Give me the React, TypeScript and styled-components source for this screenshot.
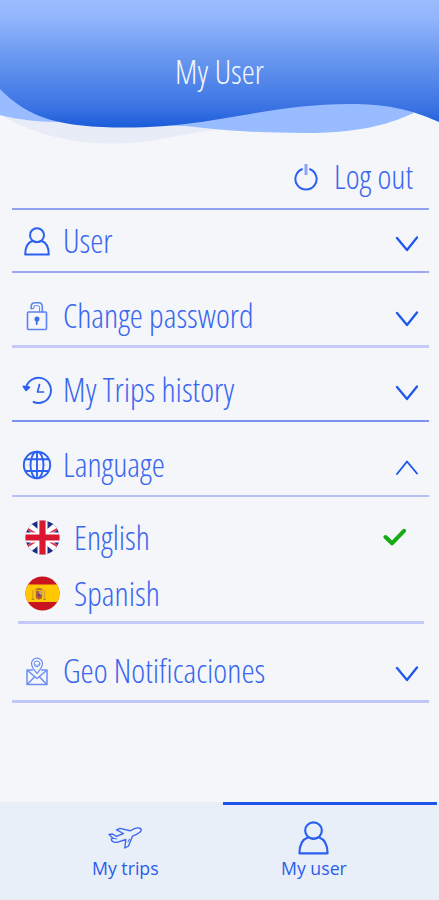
import React from 'react';
import styled, { createGlobalStyle } from 'styled-components';

const GlobalStyle = createGlobalStyle`
  * { box-sizing: border-box; }
  body { margin: 0; background: #f4f6fa; }
`;

const Screen = styled.div`
  width: 439px;
  height: 900px;
  display: flex;
  flex-direction: column;
  overflow: hidden;
  background: #f4f6fa;
  color: #3a67ef;
  font-family: 'Open Sans', 'Noto Sans', sans-serif;
`;

const Header = styled.header`
  position: relative;
  height: 146px;
  flex: none;
`;

const Waves = styled.svg`
  position: absolute;
  inset: 0;
  display: block;
`;

const Title = styled.h1`
  position: relative;
  margin: 0;
  padding-top: 49px;
  text-align: center;
  color: #f3f7ff;
  font-size: 33px;
  line-height: 46px;
  font-weight: 300;
  font-stretch: 75%;
`;

const List = styled.main`
  flex: 1;
  display: flex;
  flex-direction: column;
  padding: 0 10px 0 12px;
`;

const Row = styled.div<{ $height: number; $line: string; $thick?: number; $bottom?: number }>`
  flex: none;
  display: flex;
  align-items: flex-end;
  height: ${p => p.$height}px;
  padding: 0 10px ${p => p.$bottom ?? 7}px;
  border-bottom: ${p => p.$thick ?? 2}px solid ${p => p.$line};
`;

const LogoutRow = styled(Row)`
  justify-content: flex-end;
  padding: 0 16px 8px 0;
`;

const IconSlot = styled.span`
  width: 30px;
  height: 46px;
  display: flex;
  align-items: center;
  justify-content: center;
`;

const PowerSlot = styled(IconSlot)`
  width: 26px;
`;

const Label = styled.span<{ $gap: number }>`
  margin-left: ${p => p.$gap}px;
  font-size: 33.2px;
  line-height: 46px;
  font-weight: 300;
  font-stretch: 75%;
  white-space: nowrap;
`;

const LanguageLabel = styled(Label)`
  padding-top: 2px;
`;

const Trailing = styled.span`
  margin-left: auto;
  height: 46px;
  display: flex;
  align-items: center;
  padding-top: 5px;
`;

const CheckSlot = styled(Trailing)`
  padding-top: 0;
`;

const Languages = styled.div`
  flex: none;
  height: 127px;
  margin: 0 5px 0 6px;
  padding: 13px 0 0 7px;
  border-bottom: 3px solid #c3c9f8;
`;

const Language = styled.div`
  height: 56px;
  display: flex;
  align-items: center;
  padding: 0 17px 2px 0;
`;

const Tabs = styled.nav`
  flex: none;
  height: 98px;
  display: flex;
  background: #e9eff9;
`;

const Tab = styled.div<{ $width: number; $pad: number; $active?: boolean }>`
  width: ${p => p.$width}px;
  padding-left: ${p => p.$pad}px;
  border-top: 3px solid ${p => (p.$active ? '#1c54ec' : 'transparent')};
  display: flex;
  flex-direction: column;
  font-size: 17.7px;
  font-weight: 500;
  line-height: 24px;
  color: #2a5cec;
  white-space: nowrap;
`;

const TabBody = styled.div`
  width: max-content;
  display: flex;
  flex-direction: column;
  align-items: center;
`;

const TabIcon = styled.span`
  height: 51px;
  padding-top: 15px;
  display: flex;
  align-items: center;
`;

const stroke = { fill: 'none', stroke: '#2c60f0', strokeLinecap: 'round', strokeLinejoin: 'round' } as const;

const UserIcon = ({ width, height, weight = 2 }: { width: number; height: number; weight?: number }) => (
  <svg width={width} height={height} viewBox="0 0 26 29" preserveAspectRatio="none" {...stroke} strokeWidth={weight}>
    <ellipse cx="13" cy="8.2" rx="7" ry="7" />
    <path d="M8.6 13.8C4 15.4 1.2 19.4 1.2 27.6H24.8C24.8 19.4 22 15.4 17.4 13.8Q13 16.4 8.6 13.8Z" />
  </svg>
);

const PowerIcon = () => (
  <svg width="24" height="28" viewBox="0 0 24 28" {...stroke} strokeWidth="2">
    <path d="M8 6.2A10.6 10.6 0 1 0 16 6.2" />
    <path d="M12 1V12" stroke="#8da4f6" strokeWidth="3" strokeLinecap="butt" />
  </svg>
);

const LockIcon = () => (
  <svg width="22" height="30" viewBox="0 0 22 30" {...stroke} stroke="#5c82f3" strokeWidth="1.6">
    <rect x="1.5" y="11" width="19" height="17.5" rx="1" />
    <path d="M5.2 7.6V5.5C5.2 3 6.8 1.8 9 1.8h3.5C15 1.8 16.3 3.3 16.3 5.8V11" />
    <path d="M5.2 7.6H7.8V6Q7.8 4.7 9.2 4.7h2.6Q13.6 4.7 13.6 6.5V11" strokeWidth="1" />
    <circle cx="11" cy="18" r="1.7" fill="#3f6cf1" stroke="#3f6cf1" />
    <path d="M10.7 19v4" stroke="#3f6cf1" strokeWidth="1.8" />
  </svg>
);

const HistoryIcon = () => (
  <svg width="30" height="30" viewBox="0 0 30 30" {...stroke} strokeWidth="1.9">
    <path d="M4 13A12.6 12.6 0 1 1 11.5 27" />
    <path d="M1.5 11.5L4 15.2L7.3 12.3Z" fill="#2c60f0" />
    <path d="M17.5 9.5L15.5 17H21.5" strokeWidth="1.7" />
  </svg>
);

const GlobeIcon = () => (
  <svg width="30" height="30" viewBox="0 0 30 30" {...stroke} strokeWidth="1.9">
    <path d="M2 15H28" stroke="#dbe2fb" strokeWidth="1" />
    <circle cx="15" cy="15" r="13.2" />
    <ellipse cx="15" cy="15" rx="6.5" ry="13.2" />
    <path d="M15 2V28M3.7 9.2H26.3M3.7 21H26.3" />
  </svg>
);

const GeoMailIcon = () => (
  <svg width="22" height="29" viewBox="0 0 22 29" {...stroke} stroke="#6d8df4" strokeWidth="1.5">
    <path d="M6.5 13H1V27.5H21V13H15.5" />
    <path d="M1.5 13.5L11 21.5L20.5 13.5M1.5 27L8.5 20M20.5 27L13.5 20" />
    <path d="M11 16.5C8 13 5.5 9.8 5.5 6.5A5.5 5.3 0 0 1 16.5 6.5C16.5 9.8 14 13 11 16.5Z" strokeWidth="1.2" />
    <circle cx="11" cy="6.8" r="2.9" strokeWidth="1" />
    <path d="M9 6.8l2 2 2-2" strokeWidth="0.8" />
  </svg>
);

const Chevron = ({ up = false }: { up?: boolean }) => (
  <svg width="24" height="18" viewBox="0 0 24 18" {...stroke} stroke="#1f57ee" strokeWidth={up ? 1.9 : 2.3}>
    <path d={up ? 'M2 15L12 2.5L22 14.5' : 'M2 3L12 15L22 2.5'} />
  </svg>
);

const Check = () => (
  <svg width="24" height="20" viewBox="0 0 24 20" fill="none" stroke="#14ab14" strokeWidth="4" strokeLinecap="round" strokeLinejoin="round">
    <path d="M2.500 10L9 16.3L21 3.8" />
  </svg>
);

const UkFlag = () => (
  <svg width="35" height="35" viewBox="0 0 35 35">
    <clipPath id="uk"><circle cx="17.5" cy="17.5" r="17" /></clipPath>
    <g clipPath="url(#uk)">
      <rect width="35" height="35" fill="#1c2b83" />
      <path d="M0 3L35 32M35 3L0 32" stroke="#fff" strokeWidth="7" />
      <path d="M0 7L13 15M22 15L35 7M0 28L13 20M22 20L35 28" stroke="#dc3450" strokeWidth="2" />
      <path d="M17.5 0V35M0 17.5H35" stroke="#fff" strokeWidth="10" />
      <path d="M17.5 0V35M0 17.5H35" stroke="#db1630" strokeWidth="6.2" />
    </g>
  </svg>
);

const SpainFlag = () => (
  <svg width="35" height="35" viewBox="0 0 35 35">
    <clipPath id="es"><circle cx="17.5" cy="17.5" r="17" /></clipPath>
    <g clipPath="url(#es)">
      <rect width="35" height="35" fill="#c8141e" />
      <rect y="8.5" width="35" height="17.5" fill="#ffc800" />
      <path d="M7.8 14V23M19.5 14V23" stroke="#d8a02e" strokeWidth="1.4" />
      <path d="M6.5 23.3H9.4M18 23.3H21M10.5 13.8Q14 10.5 17.5 13.8Z" stroke="#a77b35" fill="#c55a20" strokeWidth="1" />
      <path d="M10.8 15H17.2V20Q17.2 23.5 14 23.5Q10.8 23.5 10.8 20Z" fill="#b85a35" />
      <path d="M14 15H17V19H14Z" fill="#b9a0a0" />
      <circle cx="14" cy="19.2" r="1.6" fill="#604e78" />
    </g>
  </svg>
);

const PlaneIcon = () => (
  <svg width="36" height="24" viewBox="0 0 36 24" {...stroke} stroke="#3f69ef" strokeWidth="1.4">
    <path d="M2 8.5L5.5 8L9.5 10.4L16.5 7.5L9.5 3.8L13 2.4L23 4.8L27.5 2.7C31 1.2 34 2 34.3 3.7C34.5 5.4 32.2 7 29.5 8.3L25.5 10.2L21.5 20L17.8 22L18.8 13.5L10 16.3C6.5 16.8 4.8 15.8 4.2 13.2L6 12.2Z" />
    <path d="M6 12.2L9.8 12.9M21 16L22.5 13" strokeWidth="1" />
  </svg>
);

const App = () => (
  <>
    <GlobalStyle />
    <Screen>
      <Header>
        <Waves width="439" height="146" viewBox="0 0 439 146">
          <defs>
            <linearGradient id="sky" x1="0" y1="0" x2="0" y2="128" gradientUnits="userSpaceOnUse">
              <stop offset="0" stopColor="#9bbdff" />
              <stop offset="0.14" stopColor="#92b5fc" />
              <stop offset="0.5" stopColor="#6293ee" />
              <stop offset="0.86" stopColor="#3871e2" />
              <stop offset="1" stopColor="#185bd9" />
            </linearGradient>
          </defs>
          <path d="M0 115C30 132 65 143 110 143.5C155 144 185 132 225 129L180 110L0 100Z" fill="#e8ecf7" />
          <path d="M0 80V115C20 120 35 121.5 60 122L185 126C230 131 260 133 305 133C355 133 385 126 414 113L390 95L200 100Z" fill="#98bcff" />
          <path d="M0 0H439V122C410 109 385 104 350 104C265 104 215 127.5 125 127.5C60 127.5 28 118 0 89Z" fill="url(#sky)" />
        </Waves>
        <Title>My User</Title>
      </Header>
      <List>
        <LogoutRow $height={64} $line="#91a2f3">
          <PowerSlot><PowerIcon /></PowerSlot>
          <Label $gap={15}>Log out</Label>
        </LogoutRow>
        <Row $height={63} $line="#9da7f3">
          <IconSlot><UserIcon width={26} height={29} /></IconSlot>
          <Label $gap={11}>User</Label>
          <Trailing><Chevron /></Trailing>
        </Row>
        <Row $height={75} $line="#c3c9f8" $thick={3} $bottom={6}>
          <IconSlot><LockIcon /></IconSlot>
          <Label $gap={11}>Change password</Label>
          <Trailing><Chevron /></Trailing>
        </Row>
        <Row $height={74} $line="#7c92f2">
          <IconSlot><HistoryIcon /></IconSlot>
          <Label $gap={11}>My Trips history</Label>
          <Trailing><Chevron /></Trailing>
        </Row>
        <Row $height={75} $line="#b6bff7">
          <IconSlot><GlobeIcon /></IconSlot>
          <Label $gap={11}>Language</Label>
          <Trailing><Chevron up /></Trailing>
        </Row>
        <Languages>
          <Language>
            <UkFlag />
            <LanguageLabel $gap={14}>English</LanguageLabel>
            <CheckSlot><Check /></CheckSlot>
          </Language>
          <Language>
            <SpainFlag />
            <LanguageLabel $gap={14}>Spanish</LanguageLabel>
          </Language>
        </Languages>
        <Row $height={79} $line="#c0c8f8" $thick={3} $bottom={6}>
          <IconSlot><GeoMailIcon /></IconSlot>
          <Label $gap={11}>Geo Notificaciones</Label>
          <Trailing><Chevron /></Trailing>
        </Row>
      </List>
      <Tabs>
        <Tab $width={223} $pad={92}>
          <TabBody><TabIcon><PlaneIcon /></TabIcon>My trips</TabBody>
        </Tab>
        <Tab $width={214} $pad={58} $active>
          <TabBody><TabIcon><UserIcon width={31} height={34} weight={1.8} /></TabIcon>My user</TabBody>
        </Tab>
      </Tabs>
    </Screen>
  </>
);

export default App;
